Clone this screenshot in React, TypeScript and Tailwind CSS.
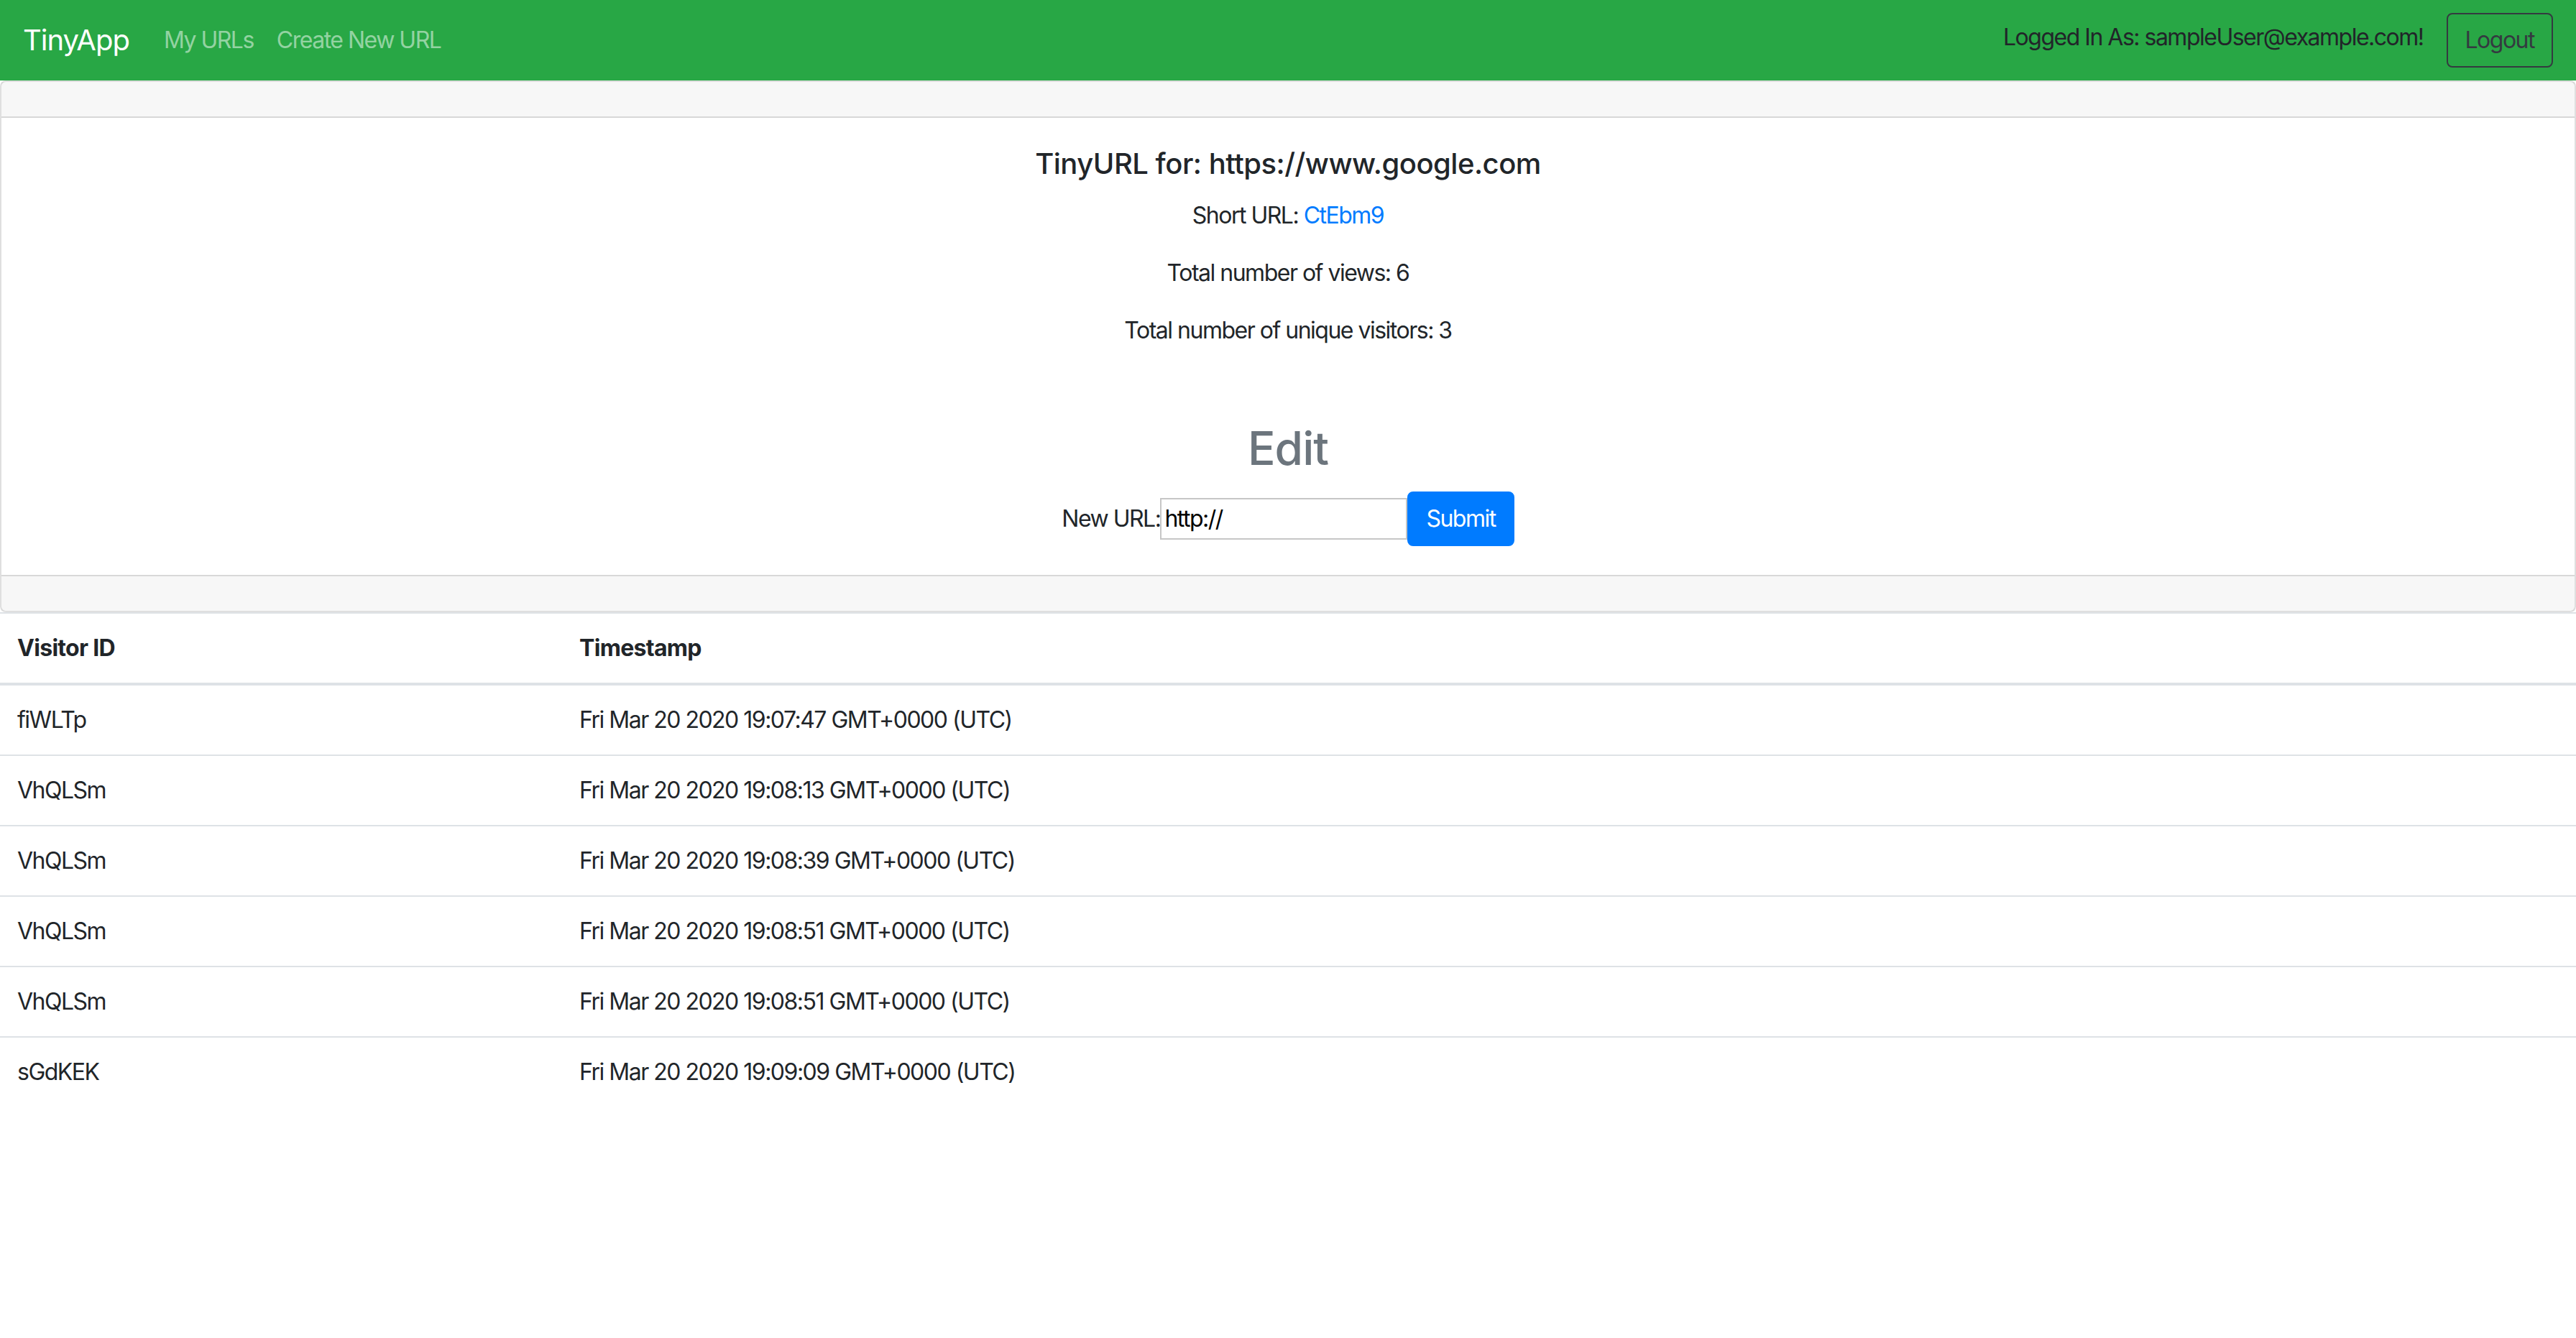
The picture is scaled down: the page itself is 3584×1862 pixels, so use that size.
import React from "react";

const rows: [string, string][] = [
  ["fiWLTp", "Fri Mar 20 2020 19:07:47 GMT+0000 (UTC)"],
  ["VhQLSm", "Fri Mar 20 2020 19:08:13 GMT+0000 (UTC)"],
  ["VhQLSm", "Fri Mar 20 2020 19:08:39 GMT+0000 (UTC)"],
  ["VhQLSm", "Fri Mar 20 2020 19:08:51 GMT+0000 (UTC)"],
  ["VhQLSm", "Fri Mar 20 2020 19:08:51 GMT+0000 (UTC)"],
  ["sGdKEK", "Fri Mar 20 2020 19:09:09 GMT+0000 (UTC)"],
];

export default function App() {
  return (
    <div className="min-h-[1862px] bg-white text-[#212529] text-[32px] leading-[48px] tracking-[-1.5px] font-[family-name:Inter,'Noto_Sans',sans-serif]">
      <nav className="flex items-center h-[112px] px-[32px] py-[16px] bg-[#28a745]">
        <a className="text-white text-[40px] leading-[60px] tracking-[-1px] py-[10px] mr-[32px]">TinyApp</a>
        <div className="flex">
          <a className="px-[16px] py-[16px] text-[rgba(255,255,255,0.5)]">My URLs</a>
          <a className="px-[16px] py-[16px] text-[rgba(255,255,255,0.5)]">Create New URL</a>
        </div>
        <div className="ml-auto flex items-center">
          <span className="mb-[8px]">Logged In As: sampleUser@example.com!</span>
          <button className="ml-[32px] border-2 border-[#343a40] text-[#343a40] rounded-[8px] px-[24px] py-[12px] leading-[48px] tracking-[-1.5px]">
            Logout
          </button>
        </div>
      </nav>

      <div className="border-2 border-[rgba(0,0,0,0.125)] rounded-[8px] text-center">
        <div className="h-[50px] bg-[rgba(0,0,0,0.03)] border-b-2 border-[rgba(0,0,0,0.125)]" />
        <div className="p-[40px]">
          <h5 className="text-[40px] leading-[48px] tracking-[-0.5px] font-medium mb-[24px]">
            TinyURL for: https://www.google.com
          </h5>
          <p className="mb-[32px]">
            Short URL: <a className="text-[#007bff]">CtEbm9</a>
          </p>
          <p className="mb-[32px]">Total number of views: 6</p>
          <p className="mb-[32px]">Total number of unique visitors: 3</p>
          <h2 className="mt-[101px] mb-[22px] text-[64px] leading-[77px] tracking-[-1px] font-medium text-[#6c757d]">
            Edit
          </h2>
          <form className="flex justify-center items-baseline">
            <label>New URL:</label>
            <input
              defaultValue="http://"
              className="w-[344px] h-[58px] border-2 border-[#c6c6c6] px-[4px] py-[3px] text-black leading-[48px] tracking-[-1.5px] outline-none"
            />
            <button
              type="button"
              className="border-2 border-[#007bff] bg-[#007bff] text-white rounded-[8px] px-[24px] py-[12px] leading-[48px] tracking-[-1.5px]"
            >
              Submit
            </button>
          </form>
        </div>
        <div className="h-[50px] bg-[rgba(0,0,0,0.03)] border-t-2 border-[rgba(0,0,0,0.125)]" />
      </div>

      <table className="w-full border-separate border-spacing-0 text-left">
        <thead>
          <tr>
            <th className="w-[782px] px-[24px] py-[24px] border-t-2 border-b-4 border-[#dee2e6] font-bold tracking-[-0.7px] align-bottom">
              Visitor ID
            </th>
            <th className="px-[24px] py-[24px] border-t-2 border-b-4 border-[#dee2e6] font-bold tracking-[-0.7px] align-bottom">
              Timestamp
            </th>
          </tr>
        </thead>
        <tbody>
          {rows.map(([id, ts], i) => (
            <tr key={i}>
              <td className={i === 0 ? "p-[24px] align-top" : "p-[24px] align-top border-t-2 border-[#dee2e6]"}>{id}</td>
              <td className={i === 0 ? "p-[24px] align-top" : "p-[24px] align-top border-t-2 border-[#dee2e6]"}>{ts}</td>
            </tr>
          ))}
        </tbody>
      </table>
    </div>
  );
}
